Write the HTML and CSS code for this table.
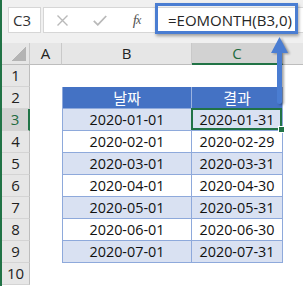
FILE: index.html
```html
<!DOCTYPE html>
<html lang="ko">
<head>
  <meta charset="UTF-8">
  <meta name="viewport" content="width=device-width, initial-scale=1.0">
  <title>EOMONTH</title>
  <link rel="stylesheet" href="styles.css">
</head>
<body>
  <div class="app">
    <div class="edge"></div>

    <div class="main">
      <!-- name box + formula bar -->
      <div class="formula-bar">
        <div class="name-box">C3</div>
        <div class="formula-field">
          <span class="tool">
            <svg width="11" height="11" viewBox="0 0 11 11"><path d="M0.5 0.5 L10.5 10.5 M10.5 0.5 L0.5 10.5" stroke="#b9b9b9" stroke-width="1.4" fill="none"/></svg>
          </span>
          <span class="tool">
            <svg width="14" height="11" viewBox="0 0 14 11"><path d="M0.8 5.8 L4.8 9.8 L13.2 1" stroke="#b9b9b9" stroke-width="1.8" fill="none"/></svg>
          </span>
          <span class="tool fx">f<small>x</small></span>
          <span class="formula-text">=EOMONTH(B3,0)</span>
        </div>
      </div>

      <!-- sheet grid -->
      <div class="sheet">
        <div class="corner"><span class="select-all"></span></div>
        <div class="col-head">A</div>
        <div class="col-head">B</div>
        <div class="col-head active">C</div>
        <div class="col-head last"></div>

        <div class="row-head">1</div>
        <div class="cell"></div><div class="cell"></div><div class="cell"></div><div class="cell"></div>

        <div class="row-head">2</div>
        <div class="cell"></div>
        <div class="tbl first head">날짜</div>
        <div class="tbl head">결과</div>
        <div class="cell"></div>

        <div class="row-head active">3</div>
        <div class="cell"></div>
        <div class="tbl first band">2020-01-01</div>
        <div class="tbl band selected">2020-01-31</div>
        <div class="cell"></div>

        <div class="row-head">4</div>
        <div class="cell"></div>
        <div class="tbl first">2020-02-01</div>
        <div class="tbl">2020-02-29</div>
        <div class="cell"></div>

        <div class="row-head">5</div>
        <div class="cell"></div>
        <div class="tbl first band">2020-03-01</div>
        <div class="tbl band">2020-03-31</div>
        <div class="cell"></div>

        <div class="row-head">6</div>
        <div class="cell"></div>
        <div class="tbl first">2020-04-01</div>
        <div class="tbl">2020-04-30</div>
        <div class="cell"></div>

        <div class="row-head">7</div>
        <div class="cell"></div>
        <div class="tbl first band">2020-05-01</div>
        <div class="tbl band">2020-05-31</div>
        <div class="cell"></div>

        <div class="row-head">8</div>
        <div class="cell"></div>
        <div class="tbl first">2020-06-01</div>
        <div class="tbl">2020-06-30</div>
        <div class="cell"></div>

        <div class="row-head">9</div>
        <div class="cell"></div>
        <div class="tbl first band">2020-07-01</div>
        <div class="tbl band">2020-07-31</div>
        <div class="cell"></div>

        <div class="row-head">10</div>
        <div class="cell"></div><div class="cell"></div><div class="cell"></div><div class="cell"></div>
      </div>
    </div>

    <!-- callout: box round the formula and arrow down to the cell -->
    <div class="callout-box"></div>
    <svg class="callout-arrow" width="22" height="70" viewBox="0 0 22 70">
      <polygon points="11.5,1 3,17 20,17" fill="#4a7dd2"/>
      <rect x="9" y="15" width="5" height="53" rx="2.5" fill="#4a7dd2"/>
    </svg>
  </div>
</body>
</html>
```

FILE: styles.css
```css
* {
  box-sizing: border-box;
}

body {
  margin: 0;
  background: #f0f0f0;
  font-family: "Open Sans", "Noto Sans", sans-serif;
  color: #222;
}

.app {
  position: relative;
  display: flex;
  width: 303px;
  height: 286px;
  overflow: hidden;
}

.edge {
  width: 2px;
  background: #217346;
}

.main {
  flex: 1;
  display: flex;
  flex-direction: column;
}

/* formula bar */
.formula-bar {
  display: flex;
  gap: 2px;
  height: 43px;
  padding: 7px 0 10px 6px;
}

.name-box {
  width: 33px;
  background: #fff;
  border: 1px solid #d6d6d6;
  padding-left: 4px;
  font-size: 15px;
  line-height: 24px;
  color: #333;
}

.formula-field {
  flex: 1;
  display: flex;
  align-items: center;
  background: #fff;
  border: 1px solid #d6d6d6;
  border-right: none;
}

.tool {
  width: 37px;
  display: flex;
  justify-content: center;
  align-items: center;
}

.fx {
  font-family: "Liberation Serif", serif;
  font-style: italic;
  font-size: 15px;
  color: #555;
  letter-spacing: -1px;
}

.fx small {
  font-size: 12px;
}

.formula-text {
  padding-left: 13px;
  font-size: 15px;
  color: #262626;
}

/* grid */
.sheet {
  flex: 1;
  display: grid;
  grid-template-columns: 28px 32px 130px 91px 1fr;
  grid-auto-rows: 22px;
  background: #fff;
  font-size: 14.4px;
}

.corner,
.col-head {
  background: #e6e6e6;
  border-right: 1px solid #c9c9c9;
  border-bottom: 1px solid #bdbdbd;
}

.corner {
  display: flex;
  justify-content: flex-end;
  align-items: flex-end;
  padding: 0 3px 3px 0;
}

.select-all {
  width: 14px;
  height: 14px;
  background: linear-gradient(to bottom right, transparent 50%, #b4b4b4 50%);
}

.col-head {
  text-align: center;
  line-height: 21px;
  font-size: 15px;
}

.col-head.last {
  border-right: none;
}

.col-head.active {
  background: #d2d2d2;
  color: #1e6b40;
  border-bottom: 2px solid #217346;
}

.row-head {
  background: #e6e6e6;
  border-right: 1px solid #bdbdbd;
  border-bottom: 1px solid #d4d4d4;
  text-align: center;
  line-height: 21px;
  font-size: 15px;
}

.row-head.active {
  background: #d2d2d2;
  color: #1e6b40;
  border-right: 2px solid #217346;
}

.cell {
  background: #fff;
}

/* formatted table B2:C9 */
.tbl {
  position: relative;
  background: #fff;
  border-right: 1px solid #8ea9db;
  border-bottom: 1px solid #8ea9db;
  text-align: center;
  line-height: 21px;
  color: #111;
}

.tbl.first {
  border-left: 1px solid #8ea9db;
}

.tbl.head {
  background: #4472c4;
  color: #fff;
  font-family: "Noto Sans CJK KR", sans-serif;
  font-size: 15px;
  border-right-color: #9bb3e0;
}

.tbl.band {
  background: #d9e1f2;
}

.tbl.selected::after {
  content: "";
  position: absolute;
  top: -1px;
  left: -1px;
  right: 0;
  bottom: 0;
  border: 2px solid #217346;
}

.tbl.selected::before {
  content: "";
  position: absolute;
  right: -2px;
  bottom: -2px;
  width: 5px;
  height: 5px;
  background: #217346;
  box-shadow: 0 0 0 1px #fff;
  z-index: 1;
}

/* callout overlay */
.callout-box {
  position: absolute;
  left: 155px;
  top: 3px;
  width: 143px;
  height: 31px;
  border: 3px solid #4a7dd2;
  box-shadow: 1px 2px 3px rgba(0, 0, 0, 0.35);
}

.callout-arrow {
  position: absolute;
  left: 268px;
  top: 36px;
  filter: drop-shadow(2px 1px 1px rgba(0, 0, 0, 0.35));
  z-index: 2;
}
```
